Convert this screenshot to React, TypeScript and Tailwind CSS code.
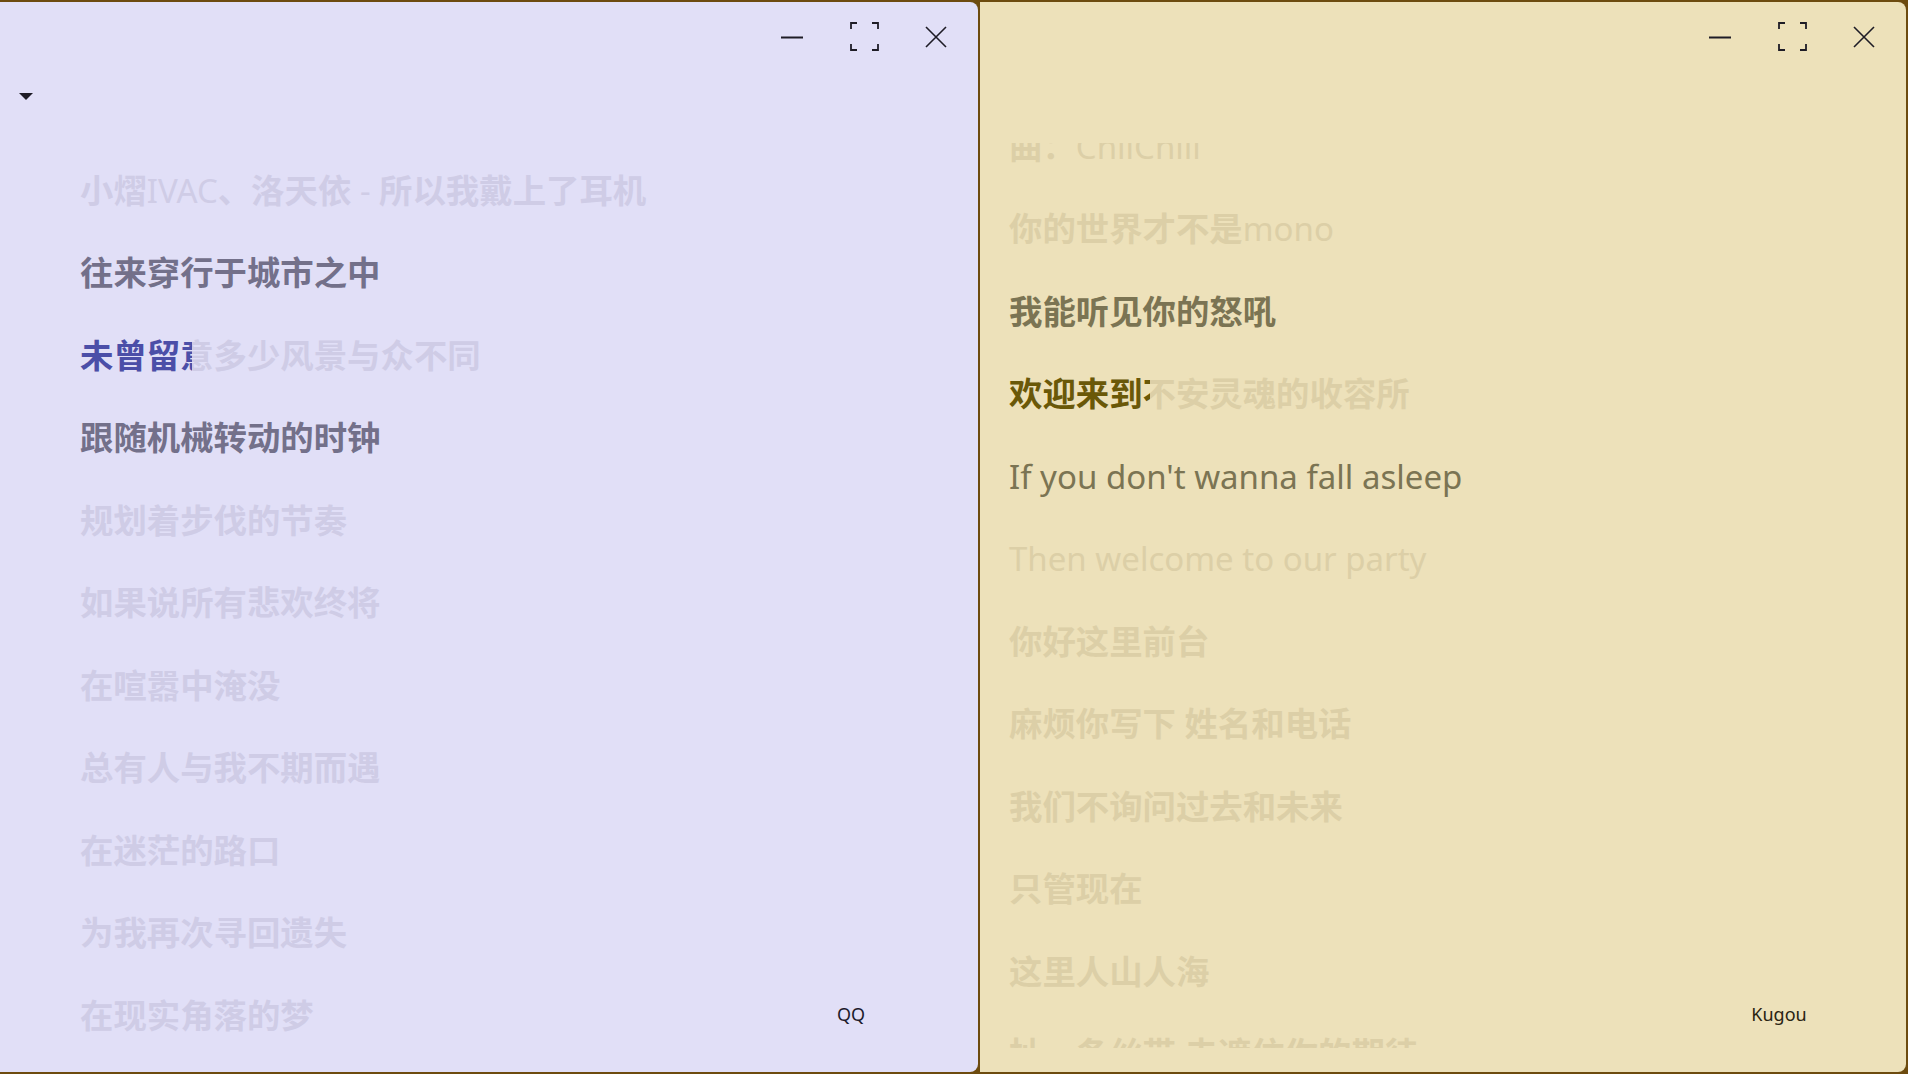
import { Fragment } from 'react';

type Tone = 'dim' | 'mid' | 'hl';
type Line = { text: string; tone: Tone; cut?: number };

type Theme = {
  bg: string;
  dim: string;
  mid: string;
  hl: string;
  ink: string;
};

const LAVENDER: Theme = {
  bg: 'bg-[#e1dff7]',
  dim: 'text-[#cfcce6]',
  mid: 'text-[#73708a]',
  hl: 'text-[#4b4ea8]',
  ink: 'text-[#1d1b2c]',
};

const SAND: Theme = {
  bg: 'bg-[#ede1ba]',
  dim: 'text-[#dccfa7]',
  mid: 'text-[#7b7453]',
  hl: 'text-[#6a5808]',
  ink: 'text-[#2a2412]',
};

const QQ_LINES: Line[] = [
  { text: '小熠IVAC、洛天依 - 所以我戴上了耳机', tone: 'dim' },
  { text: '往来穿行于城市之中', tone: 'mid' },
  { text: '未曾留意多少风景与众不同', tone: 'hl', cut: 112 },
  { text: '跟随机械转动的时钟', tone: 'mid' },
  { text: '规划着步伐的节奏', tone: 'dim' },
  { text: '如果说所有悲欢终将', tone: 'dim' },
  { text: '在喧嚣中淹没', tone: 'dim' },
  { text: '总有人与我不期而遇', tone: 'dim' },
  { text: '在迷茫的路口', tone: 'dim' },
  { text: '为我再次寻回遗失', tone: 'dim' },
  { text: '在现实角落的梦', tone: 'dim' },
];

const KUGOU_LINES: Line[] = [
  { text: '曲：ChilChill', tone: 'dim' },
  { text: '你的世界才不是mono', tone: 'dim' },
  { text: '我能听见你的怒吼', tone: 'mid' },
  { text: '欢迎来到不安灵魂的收容所', tone: 'hl', cut: 141 },
  { text: "If you don't wanna fall asleep", tone: 'mid' },
  { text: 'Then welcome to our party', tone: 'dim' },
  { text: '你好这里前台', tone: 'dim' },
  { text: '麻烦你写下 姓名和电话', tone: 'dim' },
  { text: '我们不询问过去和未来', tone: 'dim' },
  { text: '只管现在', tone: 'dim' },
  { text: '这里人山人海', tone: 'dim' },
  { text: '扯一条丝带 去遮住你的期待', tone: 'dim' },
];

const CJK = /([\u3000-\u303f\u3400-\u9fff\uff00-\uffef]+)/;

// CJK runs render bold, latin runs stay regular like the original player
const Segs = ({ text }: { text: string }) => (
  <>
    {text
      .split(CJK)
      .filter(Boolean)
      .map((s, i) => (
        <Fragment key={i}>
          {CJK.test(s) ? (
            <span>{s}</span>
          ) : (
            <span className="text-[33px] font-normal">{s}</span>
          )}
        </Fragment>
      ))}
  </>
);

const LyricRow = ({ line, theme }: { line: Line; theme: Theme }) => {
  const base = line.tone === 'mid' ? theme.mid : theme.dim;
  return (
    <div className="flex h-[82.5px] items-center">
      <div className="relative whitespace-nowrap">
        <span className={base}>
          <Segs text={line.text} />
        </span>
        {line.tone === 'hl' && (
          <span
            className="absolute left-0 top-0 overflow-hidden whitespace-nowrap"
            style={{ width: line.cut }}
          >
            <span className={theme.hl}>
              <Segs text={line.text} />
            </span>
          </span>
        )}
      </div>
    </div>
  );
};

const TitleButtons = () => (
  <div className="flex h-[69px] items-center justify-end pr-[6px] text-[#1e1c26]">
    <div className="flex h-[69px] w-[72px] items-center justify-center">
      <svg width="24" height="24" viewBox="0 0 24 24" fill="none" stroke="currentColor">
        <line x1="1" y1="12.5" x2="23" y2="12.5" strokeWidth="2.2" />
      </svg>
    </div>
    <div className="flex h-[69px] w-[72px] items-center justify-center">
      <svg width="29" height="29" viewBox="0 0 29 29" fill="none" stroke="currentColor" strokeWidth="1.8">
        <path d="M1 7V1h6M22 1h6v6M28 22v6h-6M7 28H1v-6" />
      </svg>
    </div>
    <div className="flex h-[69px] w-[72px] items-center justify-center">
      <svg width="24" height="24" viewBox="0 0 24 24" fill="none" stroke="currentColor" strokeWidth="1.6">
        <path d="M2 2l20 20M22 2L2 22" />
      </svg>
    </div>
  </div>
);

const SourceTag = ({ label, theme }: { label: string; theme: Theme }) => (
  <div
    className={`absolute bottom-[46px] right-[77px] w-[100px] text-center text-[18px] leading-[24px] ${theme.ink}`}
  >
    {label}
  </div>
);

const FONT = "font-['Noto_Sans','Noto_Sans_CJK_SC',sans-serif]";

export default function App() {
  return (
    <div className={`flex h-[1074px] w-[1908px] gap-[2px] bg-[#6d4b0f] pt-[2px] ${FONT}`}>
      <section
        className={`relative flex h-[1070px] w-[978px] flex-col overflow-hidden rounded-r-[8px] ${LAVENDER.bg}`}
      >
        <TitleButtons />
        <div className="ml-[19px] mt-[22px] h-0 w-0 border-x-[7px] border-t-[7px] border-x-transparent border-t-[#1e1c26]" />
        <div className="mt-[49px] pl-[80px] text-[33.4px] font-bold leading-none">
          {QQ_LINES.map((l, i) => (
            <LyricRow key={i} line={l} theme={LAVENDER} />
          ))}
        </div>
        <SourceTag label="QQ" theme={LAVENDER} />
      </section>

      <section
        className={`relative flex h-[1070px] w-[926px] flex-col overflow-hidden rounded-r-[8px] ${SAND.bg}`}
      >
        <TitleButtons />
        <div className="mt-[72px] h-[905px] overflow-hidden pl-[29px]">
          <div className="-mt-[38px] text-[33.4px] font-bold leading-none">
            {KUGOU_LINES.map((l, i) => (
              <LyricRow key={i} line={l} theme={SAND} />
            ))}
          </div>
        </div>
        <SourceTag label="Kugou" theme={SAND} />
      </section>
    </div>
  );
}
